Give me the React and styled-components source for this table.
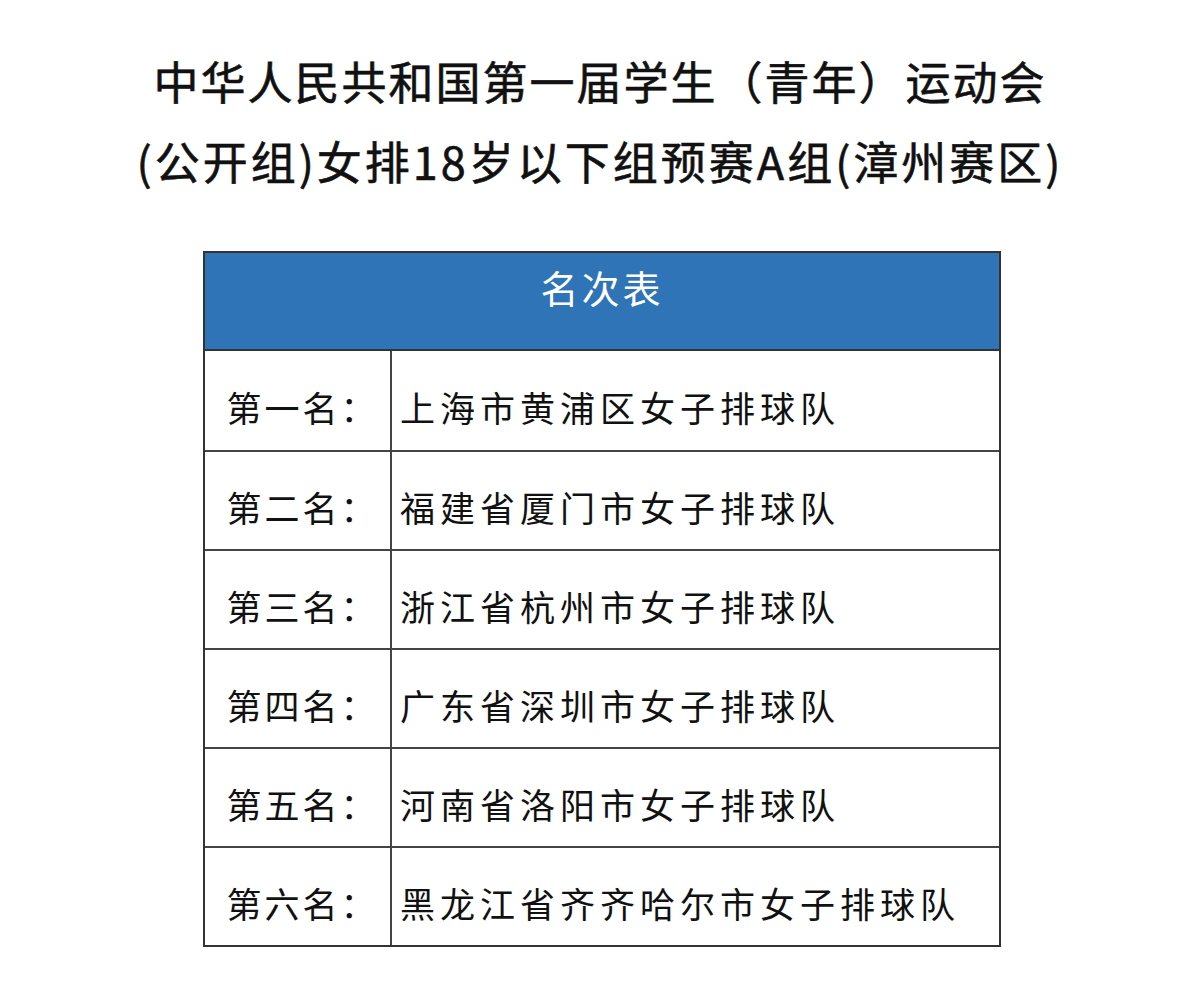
import styled, { createGlobalStyle } from "styled-components";

const GlobalStyle = createGlobalStyle`
  html, body {
    margin: 0;
    padding: 0;
    background: #ffffff;
  }
  body {
    font-family: "Noto Sans CJK SC", "Noto Sans", sans-serif;
  }
`;

const places = [
  { rank: "第一名：", team: "上海市黄浦区女子排球队" },
  { rank: "第二名：", team: "福建省厦门市女子排球队" },
  { rank: "第三名：", team: "浙江省杭州市女子排球队" },
  { rank: "第四名：", team: "广东省深圳市女子排球队" },
  { rank: "第五名：", team: "河南省洛阳市女子排球队" },
  { rank: "第六名：", team: "黑龙江省齐齐哈尔市女子排球队" },
];

function App() {
  return (
    <Page>
      <GlobalStyle />
      <Title>
        <Line $spacing={2}>中华人民共和国第一届学生（青年）运动会</Line>
        <Line $spacing={3}>(公开组)女排18岁以下组预赛A组(漳州赛区)</Line>
      </Title>
      <Table>
        <Header>名次表</Header>
        {places.map((p) => (
          <Row key={p.rank}>
            <RankCell>{p.rank}</RankCell>
            <TeamCell>{p.team}</TeamCell>
          </Row>
        ))}
      </Table>
    </Page>
  );
}

const Page = styled.div`
  width: 1200px;
  height: 1006px;
  display: flex;
  flex-direction: column;
  align-items: center;
  padding-top: 41px;
  box-sizing: border-box;
  color: #111;
`;

const Title = styled.div`
  display: flex;
  flex-direction: column;
  align-items: center;
  margin-bottom: 50px;
`;

const Line = styled.div`
  font-size: 45px;
  font-weight: 400;
  -webkit-text-stroke: 0.6px #111;
  line-height: 80px;
  letter-spacing: ${({ $spacing }) => $spacing}px;
  white-space: nowrap;
`;

const Table = styled.div`
  width: 798px;
  margin-left: 4px;
  border: 2px solid #333;
  display: flex;
  flex-direction: column;
  box-sizing: border-box;
`;

const Header = styled.div`
  height: 98px;
  background: #2e74b6;
  color: #ffffff;
  font-size: 38px;
  letter-spacing: 3px;
  display: flex;
  justify-content: center;
  padding-top: 6px;
  box-sizing: border-box;
  border-bottom: 2px solid #333;
`;

const Row = styled.div`
  height: 99px;
  display: flex;
  box-sizing: border-box;
  & + & {
    border-top: 2px solid #444;
  }
`;

const RankCell = styled.div`
  width: 187px;
  border-right: 2px solid #444;
  display: flex;
  align-items: center;
  justify-content: center;
  font-size: 35px;
  letter-spacing: 3px;
  padding-top: 12px;
  padding-left: 10px;
  box-sizing: border-box;
`;

const TeamCell = styled.div`
  flex: 1;
  display: flex;
  align-items: center;
  padding-left: 8px;
  padding-top: 12px;
  font-size: 35px;
  letter-spacing: 5px;
  box-sizing: border-box;
`;

export default App;
